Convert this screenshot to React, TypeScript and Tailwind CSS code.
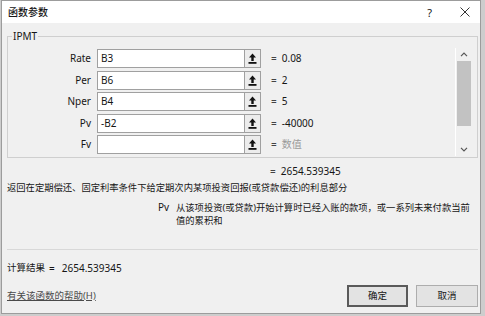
import React from "react";

const rows = [
  { label: "Rate", value: "B3", result: "0.08" },
  { label: "Per", value: "B6", result: "2" },
  { label: "Nper", value: "B4", result: "5" },
  { label: "Pv", value: "-B2", result: "-40000" },
  { label: "Fv", value: "", result: "数值", hint: true },
];

const RefIcon = () => (
  <svg width="9" height="11" viewBox="0 0 9 11">
    <path d="M4.5 0.5 L8 4.5 L5.7 4.5 L5.7 8 L3.3 8 L3.3 4.5 L1 4.5 Z" fill="#111" />
    <rect x="0.5" y="9" width="8" height="1.8" fill="#111" />
  </svg>
);

const Chevron = ({ up }: { up?: boolean }) => (
  <svg width="8" height="5" viewBox="0 0 8 5">
    <path
      d={up ? "M1 4.2 L4 1.2 L7 4.2" : "M1 0.8 L4 3.8 L7 0.8"}
      fill="none"
      stroke="#555"
      strokeWidth="1.2"
    />
  </svg>
);

export default function App() {
  return (
    <div className="w-[485px] h-[316px] bg-[#cdcdcd] overflow-hidden font-['Noto_Sans','Noto_Sans_CJK_SC',sans-serif] text-[10px] text-[#161616]">
      <div className="ml-px w-[480px] h-[314px] border border-[#9c9c9c] bg-[#f0f0f0] flex flex-col">
        {/* title bar */}
        <div className="h-[22px] bg-white flex items-center pl-[6px] pr-[10px]">
          <span className="text-[10px] leading-none font-medium">函数参数</span>
          <span className="ml-auto mr-[28px] text-[11px] leading-none">?</span>
          <svg width="10" height="10" viewBox="0 0 10 10">
            <path d="M0.5 0.5 L9.5 9.5 M9.5 0.5 L0.5 9.5" stroke="#333" strokeWidth="1" />
          </svg>
        </div>

        {/* group box */}
        <div className="relative mt-[13px] ml-[5px] mr-[2px] h-[122px] border border-[#cfcfcf] flex">
          <span className="absolute -top-[8px] left-[4px] px-[1px] bg-[#f0f0f0] text-[10px] leading-[14px]">
            IPMT
          </span>
          <div className="flex-1 flex flex-col gap-[2.5px] pt-[12px]">
            {rows.map((r) => (
              <div key={r.label} className="flex items-center h-[19px]">
                <div className="w-[83px] text-right">{r.label}</div>
                <div className="ml-[6px] w-[148px] h-[19px] bg-white border border-[#a0a0a0] flex items-center pl-[3px]">
                  {r.value}
                </div>
                <div className="-ml-px w-[17px] h-[19px] bg-[#ececec] border border-[#a0a0a0] flex items-center justify-center">
                  <RefIcon />
                </div>
                <span className="ml-[10px] text-[#444]">=</span>
                <span className={`ml-[5px] ${r.hint ? "text-[#9a9a9a]" : ""}`}>
                  {r.result}
                </span>
              </div>
            ))}
          </div>
          <div className="mr-[6px] mt-[11px] mb-[1px] w-[16px] border-l border-white flex flex-col items-center">
            <div className="h-[13px] flex items-center">
              <Chevron up />
            </div>
            <div className="w-[14px] h-[65px] bg-[#c2c2c2]" />
            <div className="mt-auto h-[14px] flex items-center">
              <Chevron />
            </div>
          </div>
        </div>

        {/* result */}
        <div className="mt-[7px] h-[13px] flex items-center pl-[268px]">
          <span className="text-[#444]">=</span>
          <span className="ml-[5px]">2654.539345</span>
        </div>

        <div className="mt-[3px] h-[13px] flex items-center pl-[5px] text-[9.3px]">
          返回在定期偿还、固定利率条件下给定期次内某项投资回报(或贷款偿还)的利息部分
        </div>

        <div className="mt-[7px] flex pl-[156px]">
          <span className="w-[18px] leading-[13px]">Pv</span>
          <span className="leading-[13px] text-[9.3px]">
            从该项投资(或贷款)开始计算时已经入账的款项，或一系列未来付款当前
            <br />
            值的累积和
          </span>
        </div>

        <div className="mt-[22px] ml-[5px] mr-[2px] h-px bg-[#d8d8d8]" />

        <div className="mt-[12px] h-[13px] flex items-center pl-[5px]">
          <span className="text-[9.5px]">计算结果</span>
          <span className="ml-[4px]">=</span>
          <span className="ml-[7px]">2654.539345</span>
        </div>

        <div className="mt-[10px] h-[22px] flex items-center pl-[5px] pr-[2px]">
          <span className="text-[9.5px] text-[#4a4a4a] underline">有关该函数的帮助(H)</span>
          <button className="ml-auto w-[61px] h-[22px] bg-[#e3e3e3] border-2 border-[#5a5a5a] text-[9.5px]">
            确定
          </button>
          <button className="ml-[8px] w-[62px] h-[22px] bg-[#e3e3e3] border border-[#adadad] text-[9.5px]">
            取消
          </button>
        </div>
      </div>
    </div>
  );
}
